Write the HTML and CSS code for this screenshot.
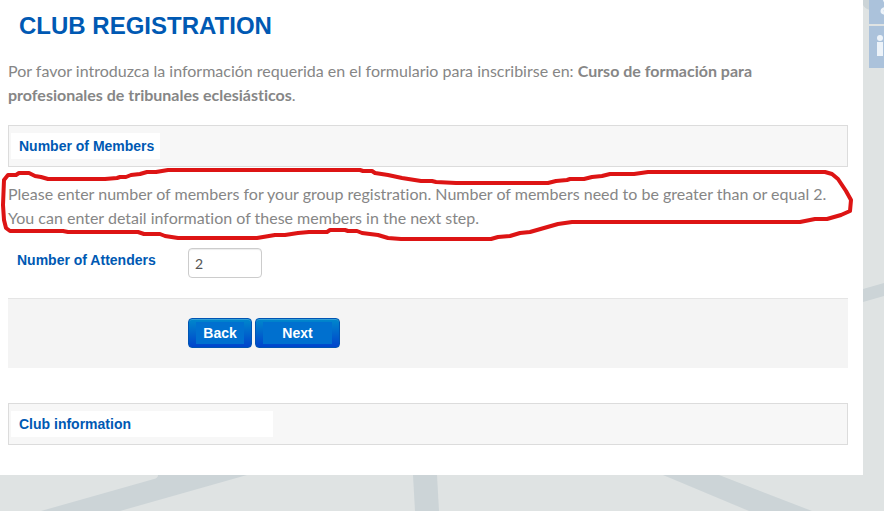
FILE: index.html
```html
<!DOCTYPE html>
<html lang="es">
  <head>
    <meta charset="UTF-8" />
    <meta name="viewport" content="width=device-width, initial-scale=1.0" />
    <title>Club Registration</title>
    <link rel="stylesheet" href="styles.css">
  </head>
  <body>
    <svg class="backdrop" viewBox="0 0 884 511" preserveAspectRatio="none" aria-hidden="true">
      <path d="M41 511 L154 479 Q158 478 158 475 H247 L120 511 Z" />
      <path d="M413 475 H437 L439 511 H415 Z" />
      <path d="M663 475 H719 L812 511 H749 Z" />
      <path d="M863 289 L884 283 V296 L863 302 Z" />
      <path d="M863 0 H870 V10 Q865 9 863 5 Z" />
    </svg>

    <main class="page">
      <h1>CLUB REGISTRATION</h1>
      <p class="intro">
        Por favor introduzca la información requerida en el formulario para inscribirse en: <strong>Curso de formación para profesionales de tribunales eclesiásticos</strong>.
      </p>

      <div class="panel">
        <h2>Number of Members</h2>
      </div>

      <div class="note">
        <p>Please enter number of members for your group registration. Number of members need to be greater than or equal 2. You can enter detail information of these members in the next step.</p>
        <svg class="marker" viewBox="0 0 863 80" preserveAspectRatio="none" aria-hidden="true">
          <path d="M4 15 L8 10 L16 10 L19 8 L29 8 L35 11 L41 12 L48 14 H105 L117 13 L120 12 H126 L131 10 L140 9 L147 7 L156 7 L168 5 H360 L363 6 L372 6 L375 8 L388 10 L402 13 L421 16 L432 16 L436 17 L456 18 H548 L556 16 L567 15 L570 14 L584 14 L592 12 L602 11 L610 9 L634 9 L648 7 H825 L832 9 L838 14 L846 26 L851 35 L850 46 L841 50 L827 54 L815 54 L800 57 H572 L558 59 L544 63 L530 67 L520 68 L510 71 L498 72 L491 74 H401 L388 73 L378 70 L362 68 L357 66 H348 L345 65 H330 L327 67 H309 L298 68 L285 70 L275 70 L257 73 H178 L165 71 L160 69 L144 69 L138 67 H68 L63 66 H10 L6 63 L4 55 L3 40 Z" />
        </svg>
      </div>

      <form>
        <div class="field">
          <label for="attenders">Number of Attenders</label>
          <input type="text" id="attenders" name="attenders" value="2" />
        </div>
        <div class="actions">
          <button type="button" class="back"><span>Back</span></button>
          <button type="submit" class="next"><span>Next</span></button>
        </div>
      </form>

      <div class="panel club">
        <h2>Club information</h2>
      </div>
    </main>

    <nav class="social">
      <a href="#" aria-label="Google Plus">
        <svg viewBox="0 0 42 42">
          <path class="line" d="M15 16 Q15 20 19 20 M20 26 C15 26 13 27 13 29 C13 32 20 32 20 29" />
        </svg>
      </a>
      <a href="#" aria-label="LinkedIn">
        <svg viewBox="0 0 42 42">
          <circle cx="11" cy="12" r="3" />
          <path d="M8 16 H14 V30 H8 Z M17 16 H22 V18 Q25 15 29 16 Q34 17 34 23 V30 H28 V24 Q28 20 25 20 Q22 20 22 24 V30 H17 Z" />
        </svg>
      </a>
    </nav>
  </body>
</html>
```
FILE: styles.css
```css
* {
  box-sizing: border-box;
}
body {
  margin: 0;
  background-color: #dfe3e3;
  color: #868686;
  font-family: Lato, "Liberation Sans", sans-serif;
  font-size: 16px;
  font-variant-ligatures: none;
  line-height: 24px;
  overflow-x: hidden;
}
.backdrop {
  position: fixed;
  top: 0;
  left: 0;
  width: 100%;
  height: 100%;
  z-index: -1;
  fill: #ccd4d7;
}
.page {
  margin-right: 21px;
  padding: 10px 15px 30px 8px;
  background-color: #fff;
}
h1,
h2,
label,
button {
  font-family: "Liberation Sans", Arial, sans-serif;
  font-weight: bold;
}
h1 {
  margin: 0 0 17px;
  padding-left: 11px;
  color: #0059b3;
  font-size: 24px;
  line-height: 32px;
}
p {
  margin: 0;
}
.intro {
  margin-bottom: 18px;
}
.panel {
  display: flex;
  height: 42px;
  padding: 7px 2px;
  background-color: #f7f7f7;
  border: 1px solid #dcdcdc;
}
h2 {
  margin: 0;
  padding: 0 6px 0 8px;
  background-color: #fff;
  color: #0059b3;
  font-size: 14px;
  line-height: 26px;
}
.club h2 {
  width: 262px;
}

/* note circled in red pen */
.note {
  position: relative;
  margin: 0 -15px 0 -8px;
  padding: 15px 24px 18px 8px;
}
.marker {
  position: absolute;
  top: -2px;
  left: 0;
  width: 100%;
  height: 80px;
  fill: none;
  stroke: #dd1414;
  stroke-width: 4;
  stroke-linejoin: round;
}

.field {
  display: flex;
  padding-left: 9px;
  margin-bottom: 20px;
}
label {
  width: 171px;
  color: #0059b3;
  font-size: 14px;
}
input {
  width: 74px;
  height: 30px;
  padding: 4px 6px;
  border: 1px solid #ccc;
  border-radius: 4px;
  box-shadow: inset 0 1px 1px rgba(0, 0, 0, 0.075);
  color: #555;
  font-family: Lato, "Liberation Sans", sans-serif;
  font-size: 14px;
}
.actions {
  display: flex;
  gap: 3px;
  padding: 19px 20px 20px 180px;
  margin-bottom: 35px;
  background-color: #f4f4f4;
  border-top: 1px solid #e5e5e5;
}
button {
  height: 30px;
  padding: 3px 7px;
  border: 1px solid #0055b3;
  border-radius: 4px;
  background-image: linear-gradient(#0088cc, #0044cc);
  box-shadow: inset 0 1px 0 rgba(255, 255, 255, 0.2);
  color: #fff;
  font-size: 14px;
}
button span {
  display: block;
  background-color: #0070cf;
  line-height: 22px;
}
.back {
  width: 64px;
}
.next {
  width: 85px;
}

.social {
  position: fixed;
  top: -18px;
  right: -27px;
  display: flex;
  flex-direction: column;
  gap: 2px;
}
.social a {
  width: 42px;
  height: 42px;
  background-color: #abc2db;
}
.social svg {
  display: block;
  fill: #edf3f9;
}
.social .line {
  fill: none;
  stroke: #edf3f9;
  stroke-width: 3;
}
```
